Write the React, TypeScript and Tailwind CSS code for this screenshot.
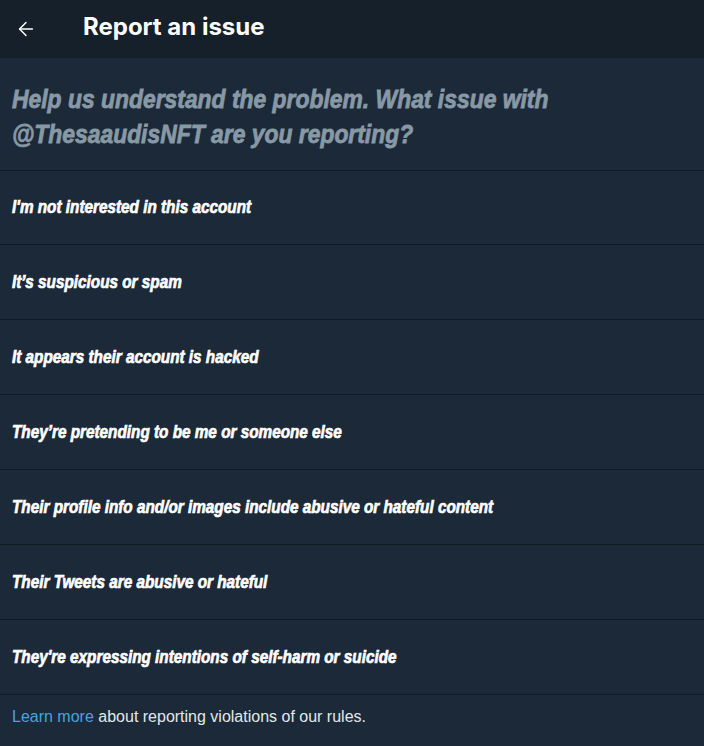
import { ArrowLeft } from "lucide-react";

const reasons = [
  "I'm not interested in this account",
  "It’s suspicious or spam",
  "It appears their account is hacked",
  "They’re pretending to be me or someone else",
  "Their profile info and/or images include abusive or hateful content",
  "Their Tweets are abusive or hateful",
  "They're expressing intentions of self-harm or suicide",
];

export default function App() {
  return (
    <div className="flex min-h-[746px] w-[704px] flex-col bg-[#1c2938] font-['Inter','Liberation_Sans',sans-serif]">
      {/* header */}
      <div className="flex h-[58px] items-center bg-[#15202b]">
        <button className="ml-[15px] flex h-[22px] w-[22px] items-center justify-center text-white">
          <ArrowLeft size={22} strokeWidth={1.6} />
        </button>
        <h1 className="ml-[46px] pb-[4px] text-[24px] font-bold text-white">Report an issue</h1>
      </div>

      {/* question */}
      <div className="border-b border-[#131c26] px-[12px] pb-[18px] pt-[24px]">
        <p className="inline-block origin-left scale-x-[0.88] whitespace-nowrap font-['Liberation_Sans',sans-serif] text-[26px] font-bold italic leading-[35px] text-[#8899a6] [-webkit-text-stroke:0.8px_#8899a6]">
          Help us understand the problem. What issue with
          <br />
          @ThesaaudisNFT are you reporting?
        </p>
      </div>

      {/* options */}
      <div className="flex flex-col">
        {reasons.map((r, i) => (
          <div
            key={r}
            className={`flex cursor-pointer items-center border-b border-[#131c26] px-[12px] ${i === 0 ? "h-[74px]" : "h-[75px]"}`}
          >
            <span className="inline-block origin-left scale-x-[0.85] whitespace-nowrap font-['Liberation_Sans',sans-serif] text-[18px] font-bold italic text-white [-webkit-text-stroke:0.7px_white]">
              {r}
            </span>
          </div>
        ))}
      </div>

      {/* footer */}
      <p className="px-[12px] pt-[10px] font-['Liberation_Sans',sans-serif] text-[16px] text-[#e1e8ed]">
        <a href="#" className="text-[#4aa3df]">
          Learn more
        </a>{" "}
        about reporting violations of our rules.
      </p>
    </div>
  );
}
